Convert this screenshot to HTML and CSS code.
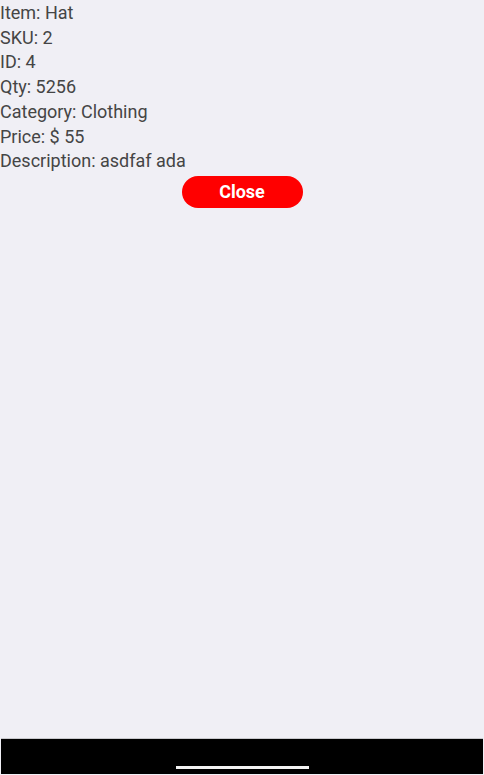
FILE: index.html
```html
<!DOCTYPE html>
<html>
<head>
<meta charset="utf-8">
<link rel="stylesheet" href="styles.css">
</head>
<body>
<div class="screen">
  <main class="content">
    <div class="details">
      <div class="line">Item: Hat</div>
      <div class="line">SKU: 2</div>
      <div class="line">ID: 4</div>
      <div class="line">Qty: 5256</div>
      <div class="line">Category: Clothing</div>
      <div class="line">Price: $ 55</div>
      <div class="line">Description: asdfaf ada</div>
    </div>
    <div class="actions">
      <button class="close-btn">Close</button>
    </div>
  </main>
  <div class="navbar">
    <div class="home-indicator"></div>
  </div>
</div>
</body>
</html>
```
FILE: styles.css
```css
html, body {
  margin: 0;
  padding: 0;
}
body {
  background: #f0eff5;
  font-family: Roboto, "Liberation Sans", sans-serif;
}
.screen {
  width: 484px;
  height: 775px;
  display: flex;
  flex-direction: column;
}
.content {
  flex: 1;
  display: flex;
  flex-direction: column;
}
.details {
  padding-top: 1px;
}
.line {
  font-size: 18px;
  line-height: 24.7px;
  color: #454545;
}
.actions {
  display: flex;
  justify-content: center;
  padding-top: 2px;
}
.close-btn {
  width: 121px;
  height: 32px;
  border: none;
  border-radius: 16px;
  background: #ff0000;
  color: #fff;
  font-family: Roboto, "Liberation Sans", sans-serif;
  font-weight: 700;
  font-size: 18px;
  padding: 0;
}
.navbar {
  height: 35px;
  margin: 0 1px 1px;
  background: #000;
  border-top: 1px solid #c8c8cc;
  display: flex;
  justify-content: center;
  align-items: flex-end;
}
.home-indicator {
  width: 133px;
  height: 3px;
  background: #f2f2f2;
  margin-bottom: 5px;
}
```
